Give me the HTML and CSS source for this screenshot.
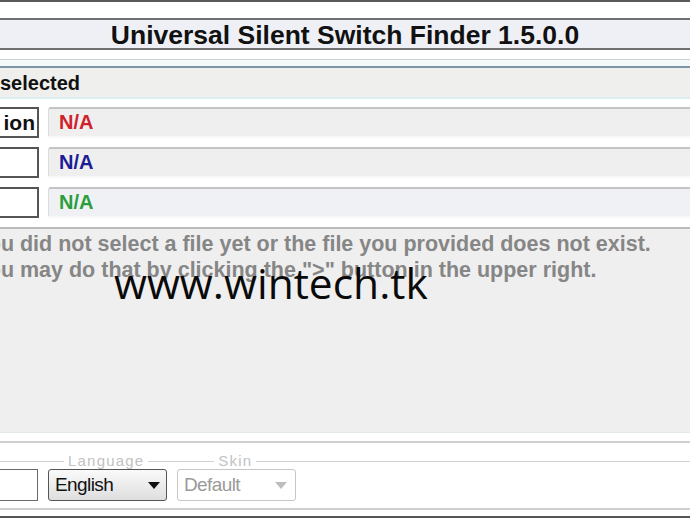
FILE: index.html
```html
<!DOCTYPE html>
<html>
<head>
<meta charset="utf-8">
<link rel="stylesheet" href="styles.css">
</head>
<body>
<div class="app">
  <div class="topline"></div>
  <div class="topgap"></div>
  <header class="titlebar">Universal Silent Switch Finder 1.5.0.0</header>
  <div class="subgap"></div>
  <div class="subband"></div>
  <div class="selbar"><span class="seltext">selected</span></div>
  <div class="rows">
    <div class="row">
      <div class="label">ion</div>
      <div class="field"><span class="na red">N/A</span></div>
    </div>
    <div class="row">
      <div class="label"></div>
      <div class="field"><span class="na blue">N/A</span></div>
    </div>
    <div class="row">
      <div class="label"></div>
      <div class="field tint"><span class="na green">N/A</span></div>
    </div>
  </div>
  <section class="msg">
    <p class="msgtext">You did not select a file yet or the file you provided does not exist.<br>You may do that by clicking the "&gt;" button in the upper right.</p>
    <div class="watermark">www.wintech.tk</div>
  </section>
  <div class="footgap"></div>
  <div class="footline"></div>
  <div class="legendrow">
    <span class="seg seg1"></span>
    <span class="legend lang">Language</span>
    <span class="seg seg2"></span>
    <span class="legend skin">Skin</span>
    <span class="seg seg3"></span>
  </div>
  <div class="controls">
    <div class="smallbox"></div>
    <div class="select">
      <span class="seltxt">English</span>
      <svg class="arrow" width="12" height="7" viewBox="0 0 12 7"><path d="M0 0 H12 L6 7 Z" fill="#111"/></svg>
    </div>
    <div class="select disabled">
      <span class="seltxt">Default</span>
      <svg class="arrow" width="12" height="7" viewBox="0 0 12 7"><path d="M0 0 H12 L6 7 Z" fill="#bdbdbd"/></svg>
    </div>
  </div>
  <div class="bottomgap"></div>
  <div class="bottomline"></div>
  <div class="bottomgap2"></div>
  <div class="bottomdark"></div>
</div>
</body>
</html>
```
FILE: styles.css
```css
html, body {
  margin: 0;
  padding: 0;
  background: #ffffff;
}
body {
  width: 690px;
  height: 518px;
  overflow: hidden;
  font-family: "Liberation Sans", Arial, sans-serif;
}
.app {
  display: flex;
  flex-direction: column;
  width: 690px;
  height: 518px;
  position: relative;
}
.topline {
  height: 2px;
  background: #5a5a5a;
}
.topgap {
  height: 16px;
  background: #ffffff;
}
.titlebar {
  height: 28px;
  border-top: 2px solid #707070;
  border-bottom: 2px solid #707070;
  background: #eef0f6;
  font-weight: bold;
  font-size: 26.5px;
  line-height: 30px;
  text-align: center;
  color: #111;
}
.subgap {
  height: 9px;
  background: #ffffff;
}
.subband {
  height: 6px;
  border-top: 1px solid #cfcfcf;
  background: #f3f9f9;
}
.selbar {
  height: 29px;
  border-top: 2px solid #7f94a9;
  border-bottom: 2px solid #dcefef;
  background: #efefed;
  display: flex;
  align-items: center;
}
.seltext {
  font-weight: bold;
  font-size: 20px;
  color: #111;
  margin-top: 1px;
}
.rows {
  display: flex;
  flex-direction: column;
  gap: 9px;
  padding: 8px 0 9px;
}
.row {
  display: flex;
  height: 31px;
  gap: 9px;
}
.label {
  border: 2px solid #555;
  border-left: none;
  font-weight: bold;
  font-size: 21px;
  line-height: 27px;
  text-align: right;
  padding-right: 2px;
  color: #111;
  box-sizing: border-box;
  width: 39px;
  overflow: hidden;
  white-space: nowrap;
}
.field {
  flex: 1;
  background: #efefef;
  border-top: 2px solid #c4c4c4;
  border-bottom: 2px solid #f9f9f9;
  border-left: 1px solid #dcdcdc;
  border-radius: 3px 0 0 3px;
  display: flex;
  align-items: center;
  padding-left: 10px;
}
.field.tint {
  background: #f0f1f5;
}
.na {
  font-weight: bold;
  font-size: 20px;
}
.red { color: #d0202a; }
.blue { color: #1c1c96; }
.green { color: #2a9e3a; }
.msg {
  height: 203px;
  border-top: 2px solid #bcbcbc;
  border-bottom: 1px solid #e2e8ea;
  background: #efefef;
  position: relative;
  overflow: hidden;
}
.msgtext {
  margin: 2px 0 0 -25px;
  font-weight: bold;
  font-size: 21.5px;
  line-height: 26px;
  color: #868686;
  white-space: nowrap;
}
.watermark {
  position: absolute;
  left: 114px;
  top: 29px;
  font-family: "Open Sans", "DejaVu Sans", sans-serif;
  font-size: 42.5px;
  color: #0a0a0a;
  line-height: 50px;
}
.footgap {
  height: 8px;
  background: #ffffff;
}
.footline {
  height: 18px;
  border-top: 2px solid #cfcfcf;
  background: #ffffff;
}
.legendrow {
  display: flex;
  align-items: center;
  height: 0;
}
.seg {
  height: 0;
  border-top: 1px solid #d2d2d2;
}
.seg1 { width: 64px; }
.seg2 { width: 66px; }
.seg3 { flex: 1; }
.legend {
  font-size: 15px;
  color: #c2c2c2;
  letter-spacing: 1.2px;
  padding: 0 4px;
  line-height: 16px;
}
.controls {
  display: flex;
  height: 32px;
  margin-top: 8px;
  gap: 10px;
}
.smallbox {
  width: 38px;
  border: 1px solid #6a6a6a;
  border-left: none;
  box-sizing: border-box;
}
.select {
  width: 119px;
  box-sizing: border-box;
  border: 1px solid #555;
  border-radius: 3px;
  background: linear-gradient(#fafafa, #dedede);
  display: flex;
  align-items: center;
  justify-content: space-between;
  padding: 0 6px 0 6px;
}
.select.disabled {
  border-color: #c6c6c6;
  background: #ffffff;
  padding-right: 8px;
}
.seltxt {
  font-size: 19px;
  color: #111;
  letter-spacing: -0.6px;
}
.disabled .seltxt {
  color: #9a9a9a;
}
.bottomgap {
  height: 7px;
  background: #ffffff;
}
.bottomline {
  height: 0;
  border-top: 2px solid #cfcfcf;
}
.bottomgap2 {
  flex: 1;
  background: #ffffff;
}
.bottomdark {
  height: 2px;
  background: #555;
}
```
